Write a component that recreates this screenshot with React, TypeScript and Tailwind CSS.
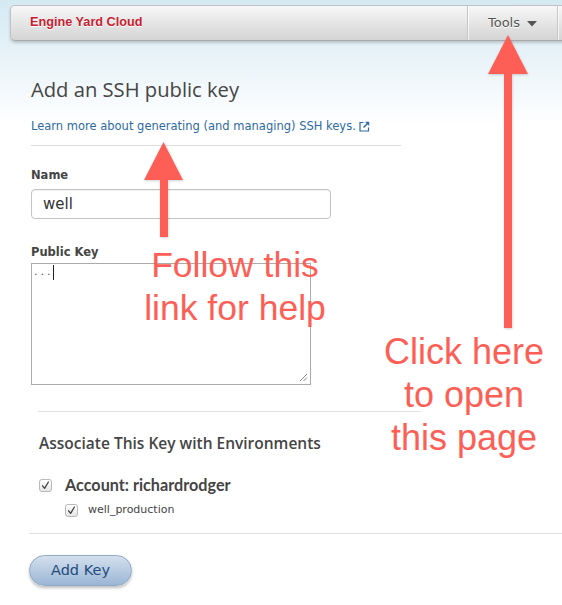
import React from "react";

const RED = "#fd5f56";

function Check({ size = 13 }: { size?: number }) {
  return (
    <span
      className="inline-flex items-center justify-center rounded-[3px] border border-[#b9b9b9] bg-[linear-gradient(to_bottom,#ffffff,#e6e6e6)] shadow-[0_1px_0_rgba(255,255,255,0.8)]"
      style={{ width: size, height: size }}
    >
      <svg width="9" height="9" viewBox="0 0 9 9">
        <path d="M1.6 4.8 L3.6 7.4 L7.4 1" fill="none" stroke="#444" strokeWidth="1.3" strokeLinecap="round" strokeLinejoin="round" />
      </svg>
    </span>
  );
}

export default function App() {
  const ui = { fontFamily: '"DejaVu Sans", "Liberation Sans", sans-serif' };
  const head = { fontFamily: '"Open Sans", "Liberation Sans", sans-serif' };
  const lato = { fontFamily: 'Lato, "Open Sans", sans-serif' };
  const arial = { fontFamily: '"Liberation Sans", Arial, sans-serif' };
  return (
    <div className="relative w-[562px] h-[605px] overflow-hidden bg-[linear-gradient(to_bottom,#d5e9f3_0px,#ffffff_125px)]">
      {/* Navbar */}
      <div className="pt-[5px] pl-[10px]">
        <div className="flex h-[36px] w-[600px] items-stretch rounded-l-[5px] border border-[#c2c2c2] border-b-[#a8a8a8] bg-[linear-gradient(to_bottom,#f7f7f7,#d4d4d4)] shadow-[0_2px_3px_rgba(0,0,0,0.18)]">
          <div className="flex w-[456px] items-center pl-[19px]">
            <span className="text-[12.7px] font-bold text-[#c41f33] [text-shadow:0_1px_0_#fff]" style={arial}>
              Engine Yard Cloud
            </span>
          </div>
          <div className="flex w-[90px] items-center justify-center gap-[7px] border-l border-[#c6c6c6] shadow-[inset_1px_0_0_rgba(255,255,255,0.7)]">
            <span className="text-[13px] text-[#555] [text-shadow:0_1px_0_#fff]" style={ui}>Tools</span>
            <svg width="10" height="6" viewBox="0 0 10 6" className="mt-[2px]">
              <path d="M0 0 L10 0 L5 5.5 Z" fill="#555" />
            </svg>
          </div>
          <div className="flex-1 border-l border-[#c6c6c6] shadow-[inset_1px_0_0_rgba(255,255,255,0.7)]" />
        </div>
      </div>

      {/* Content */}
      <div className="pl-[31px]">
        <h1 className="mt-[35px] text-[20.2px] leading-[26px] text-[#454545]" style={head}>
          Add an SSH public key
        </h1>
        <div className="mt-[16px] flex items-center gap-[3px] text-[11.5px] leading-[16px] text-[#2c6aa3]" style={ui}>
          <span>Learn more about generating (and managing) SSH keys.</span>
          <svg width="11" height="11" viewBox="0 0 11 11">
            <path d="M4.5 1.5 H1 V10 H9.5 V6.5" fill="none" stroke="#2c6aa3" strokeWidth="1.2" />
            <path d="M6 0.8 H10.2 V5 Z" fill="#2c6aa3" />
            <path d="M4.5 6.5 L9 2" stroke="#2c6aa3" strokeWidth="1.5" />
          </svg>
        </div>
        <div className="mt-[11px] h-px w-[370px] bg-[#dedede]" />

        <div className="mt-[22px] text-[11.5px] font-bold leading-[14px] text-[#444]" style={ui}>Name</div>
        <div className="mt-[7px] flex h-[30px] w-[300px] items-center rounded-[4px] border border-[#c3c3c3] bg-white pl-[11px] text-[15px] text-[#333] shadow-[inset_0_1px_1px_rgba(0,0,0,0.06)]" style={ui}>
          well
        </div>

        <div className="mt-[26px] text-[11.5px] font-bold leading-[14px] text-[#444]" style={ui}>Public Key</div>
        <div className="relative mt-[4px] h-[122px] w-[280px] border border-[#ababab] bg-white">
          <div className="flex items-start pl-[2px] pt-px">
            <span className="text-[11px] leading-[14px] tracking-[3px] text-[#555]" style={ui}>...</span>
            <span className="ml-[-1px] h-[15px] w-px bg-[#222]" />
          </div>
          <svg width="9" height="9" viewBox="0 0 9 9" className="absolute bottom-[2px] right-[2px]">
            <path d="M8 1 L1 8 M8 4.5 L4.5 8" stroke="#777" strokeWidth="0.9" />
          </svg>
        </div>
      </div>

      <div className="mt-[26px] ml-[38px] h-px w-[383px] bg-[#e0e0e0]" />
      <div className="pl-[39px]">
        <div className="mt-[21px] text-[15.5px] font-semibold leading-[20px] text-[#454545]" style={head}>
          Associate This Key with Environments
        </div>
        <div className="mt-[22px] flex items-center gap-[13px]">
          <Check />
          <span className="text-[16.2px] font-bold leading-[20px] text-[#444]" style={lato}>Account: richardrodger</span>
        </div>
        <div className="mt-[7px] ml-[26px] flex items-center gap-[10px]">
          <Check />
          <span className="text-[11px] leading-[16px] text-[#444]" style={ui}>well_production</span>
        </div>
      </div>
      <div className="mt-[15px] ml-[29px] h-px w-[540px] bg-[#e0e0e0]" />

      <div className="pl-[29px] pt-[21px]">
        <button
          className="flex h-[31px] w-[103px] items-center justify-center rounded-full border border-[#8fa9c6] bg-[linear-gradient(to_bottom,#d3e0ee,#9bb6d5)] text-[14.5px] text-[#1f4c7c] shadow-[0_2px_3px_rgba(0,0,0,0.25)]"
          style={ui}
        >
          Add Key
        </button>
      </div>

      {/* Annotations */}
      <svg className="pointer-events-none absolute left-0 top-0" width="562" height="605" viewBox="0 0 562 605">
        <defs>
          <filter id="sh" x="-20%" y="-20%" width="140%" height="140%">
            <feDropShadow dx="0.5" dy="1" stdDeviation="0.8" floodColor="#000" floodOpacity="0.18" />
          </filter>
        </defs>
        <g fill={RED} filter="url(#sh)">
          <path d="M163.5 142 L183 180 L168 180 L168 237 L160 237 L160 180 L144 180 Z" />
          <path d="M508 35 L528 74 L512 74 L512 328 L504 328 L504 74 L488 74 Z" />
        </g>
      </svg>
      <div
        className="pointer-events-none absolute left-[135px] top-[244px] w-[200px] text-center text-[35.5px] leading-[43px] text-[#fd5f56]"
        style={arial}
      >
        Follow this
        <br />
        link for help
      </div>
      <div
        className="pointer-events-none absolute left-[364px] top-[330px] w-[200px] text-center text-[36px] leading-[43px] text-[#fd5f56]"
        style={arial}
      >
        Click here
        <br />
        to open
        <br />
        this page
      </div>
    </div>
  );
}
